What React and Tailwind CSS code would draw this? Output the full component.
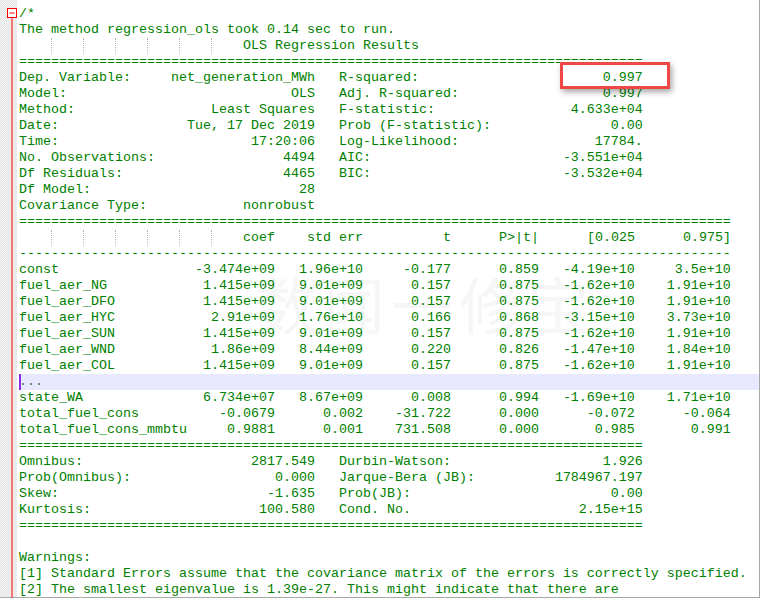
import React from 'react';

const row = (l1, v1, l2 = '', v2 = '') =>
    l1 + v1.padStart(37 - l1.length) + (l2 ? '   ' + l2 + v2.padStart(38 - l2.length) : '');

const crow = (name, a, b, c, d, e, f) =>
    name + a.padStart(32 - name.length) + b.padStart(11) + c.padStart(11) + d.padStart(11) + e.padStart(12) + f.padStart(12);

const eq78 = '='.repeat(78);
const eq89 = '='.repeat(89);
const dash89 = '-'.repeat(89);

const header = crow('', 'coef', 'std err', 't', 'P>|t|', '[0.025', '0.975]').slice(28);

const lines = [
    { text: '/*' },
    { text: 'The method regression_ols took 0.14 sec to run.' },
    { guides: true, text: 'OLS Regression Results' },
    { text: eq78 },
    { text: row('Dep. Variable:', 'net_generation_MWh', 'R-squared:', '0.997') },
    { text: row('Model:', 'OLS', 'Adj. R-squared:', '0.997') },
    { text: row('Method:', 'Least Squares', 'F-statistic:', '4.633e+04') },
    { text: row('Date:', 'Tue, 17 Dec 2019', 'Prob (F-statistic):', '0.00') },
    { text: row('Time:', '17:20:06', 'Log-Likelihood:', '17784.') },
    { text: row('No. Observations:', '4494', 'AIC:', '-3.551e+04') },
    { text: row('Df Residuals:', '4465', 'BIC:', '-3.532e+04') },
    { text: row('Df Model:', '28') },
    { text: row('Covariance Type:', 'nonrobust') },
    { text: eq89 },
    { guides: true, text: header },
    { text: dash89 },
    { text: crow('const', '-3.474e+09', '1.96e+10', '-0.177', '0.859', '-4.19e+10', '3.5e+10') },
    { text: crow('fuel_aer_NG', '1.415e+09', '9.01e+09', '0.157', '0.875', '-1.62e+10', '1.91e+10') },
    { text: crow('fuel_aer_DFO', '1.415e+09', '9.01e+09', '0.157', '0.875', '-1.62e+10', '1.91e+10') },
    { text: crow('fuel_aer_HYC', '2.91e+09', '1.76e+10', '0.166', '0.868', '-3.15e+10', '3.73e+10') },
    { text: crow('fuel_aer_SUN', '1.415e+09', '9.01e+09', '0.157', '0.875', '-1.62e+10', '1.91e+10') },
    { text: crow('fuel_aer_WND', '1.86e+09', '8.44e+09', '0.220', '0.826', '-1.47e+10', '1.84e+10') },
    { text: crow('fuel_aer_COL', '1.415e+09', '9.01e+09', '0.157', '0.875', '-1.62e+10', '1.91e+10') },
    { text: '...', current: true },
    { text: crow('state_WA', '6.734e+07', '8.67e+09', '0.008', '0.994', '-1.69e+10', '1.71e+10') },
    { text: crow('total_fuel_cons', '-0.0679', '0.002', '-31.722', '0.000', '-0.072', '-0.064') },
    { text: crow('total_fuel_cons_mmbtu', '0.9881', '0.001', '731.508', '0.000', '0.985', '0.991') },
    { text: eq78 },
    { text: row('Omnibus:', '2817.549', 'Durbin-Watson:', '1.926') },
    { text: row('Prob(Omnibus):', '0.000', 'Jarque-Bera (JB):', '1784967.197') },
    { text: row('Skew:', '-1.635', 'Prob(JB):', '0.00') },
    { text: row('Kurtosis:', '100.580', 'Cond. No.', '2.15e+15') },
    { text: eq78 },
    { text: '' },
    { text: 'Warnings:' },
    { text: '[1] Standard Errors assume that the covariance matrix of the errors is correctly specified.' },
    { text: '[2] The smallest eigenvalue is 1.39e-27. This might indicate that there are' },
];

function Guides() {
    return (
        <>
            <span className="inline-block w-[32px] h-[16px] align-top" />
            {[0, 1, 2, 3, 4, 5].map(i => (
                <span key={i} className="inline-block w-[32px] h-[16px] align-top border-l border-dotted border-[#b8b8b8]" />
            ))}
        </>
    );
}

function Line({ line }) {
    const base = "h-[16px] leading-[16px] whitespace-pre";
    if (line.current) {
        return (
            <div className={base + " bg-[#e8e8ff] shadow-[inset_2px_0_0_#8a2be2] text-[#3c7a3c]"}>{line.text}</div>
        );
    }
    return (
        <div className={base}>
            {line.guides && <Guides />}
            {line.text}
        </div>
    );
}

export default function App() {
    return (
        <div className="w-[763px] h-[600px] bg-white overflow-hidden relative">
            <div className="w-[760px] h-[598px] border-r border-b border-[#a8a8a8] flex">
                <div className="w-[19px] shrink-0 relative">
                    <div className="absolute left-0 top-0 bottom-0 w-[17px] bg-[repeating-conic-gradient(#e4e4e4_0_25%,#f4f4f4_0_50%)] bg-[length:2px_2px]" />
                    <svg className="absolute left-0 top-0" width="19" height="598">
                        <rect x="7.5" y="8.5" width="9" height="9" fill="#fff" stroke="#ff0000" strokeWidth="1" />
                        <line x1="9.5" y1="13" x2="14.5" y2="13" stroke="#ff0000" strokeWidth="1" />
                        <line x1="12" y1="18" x2="12" y2="598" stroke="#ff0000" strokeWidth="1" />
                    </svg>
                </div>
                <div className="flex-1 relative pt-[6px] text-[13.333px] text-[#008000] font-['Liberation_Mono',monospace]">
                    <div className="absolute left-[236px] top-[268px] flex gap-[6px] text-[62px] leading-[70px] text-[#f6f6f6] font-['Noto_Sans_CJK_SC',sans-serif] select-none">
                        <span>数</span>
                        <span>闻</span>
                        <span>一</span>
                        <span>修</span>
                        <span>宝</span>
                    </div>
                    <div className="relative">
                        {lines.map((line, i) => (
                            <Line key={i} line={line} />
                        ))}
                    </div>
                </div>
            </div>
            <div className="absolute left-[560px] top-[62px] w-[110px] h-[27px] border-[3px] border-[#ef4646] shadow-[2px_3px_6px_rgba(0,0,0,0.35)]" />
        </div>
    );
}
